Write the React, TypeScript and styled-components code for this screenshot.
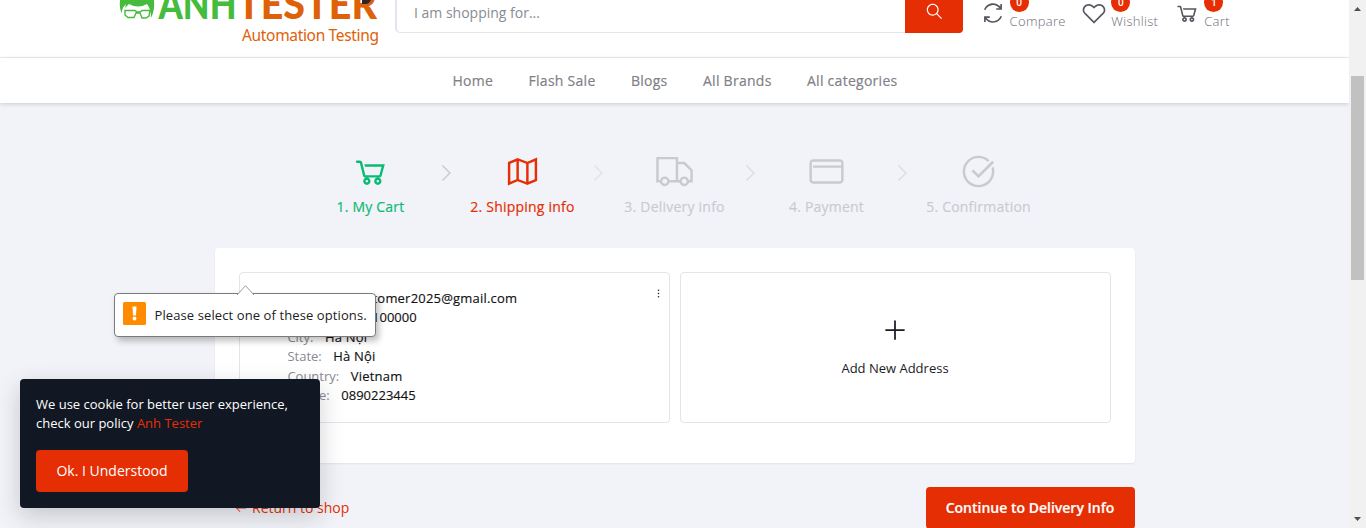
import React from "react";
import styled, { createGlobalStyle } from "styled-components";
import {
  LiaAngleRightSolid,
  LiaArrowLeftSolid,
  LiaCheckCircle,
  LiaCreditCard,
  LiaEllipsisVSolid,
  LiaHeart,
  LiaMapSolid,
  LiaPlusSolid,
  LiaSearchSolid,
  LiaShoppingCartSolid,
  LiaSyncSolid,
  LiaTruckSolid,
} from "react-icons/lia";

const RED = "#e62e04";
const GREEN = "#0abb75";
const INK = "#1b1b28";

const GlobalStyle = createGlobalStyle`
  * { box-sizing: border-box; }
  body {
    margin: 0;
    overflow: hidden;
    background: #f2f3f8;
    color: ${INK};
    font: 400 13px/19.5px "Open Sans", "Noto Sans", sans-serif;
  }
  svg { display: block; flex: none; }
`;

const Window = styled.div`
  display: flex;
  height: 528px;
  overflow: hidden;
`;

const Page = styled.div`
  position: relative;
  width: 1349px;
  height: 528px;
  overflow: hidden;
`;

const TopBar = styled.header`
  display: flex;
  height: 58px;
  padding-left: 118px;
  background: #fff;
  border-bottom: 1px solid #eeeef0;
`;

const LogoArt = styled.svg`
  width: 262px;
  height: 50px;
  margin-right: 15px;
`;

const Search = styled.div`
  display: flex;
  width: 568px;
  height: 33px;
`;

const SearchInput = styled.div`
  flex: 1;
  padding: 3px 0 0 17px;
  border: solid #e2e5ec;
  border-width: 0 0 1px 2px;
  border-radius: 0 0 0 5px;
  color: #898b92;
  font-size: 14px;
`;

const SearchButton = styled.div`
  display: flex;
  justify-content: center;
  width: 58px;
  padding-top: 2px;
  border-radius: 0 0 4px 0;
  background: ${RED};
  color: #fff;
  svg { transform: scaleX(-1); }
`;

const HeaderLink = styled.div<{ $gap: number }>`
  display: flex;
  height: 40px;
  margin-left: ${(p) => p.$gap}px;
  color: #55565f;
`;

const HeaderLabel = styled.div`
  display: flex;
  flex-direction: column;
  margin: -7px 0 0 4px;
  color: #6b6c74;
  font-weight: 300;
  letter-spacing: 0.3px;
`;

const Badge = styled.span`
  display: block;
  width: 19px;
  height: 19px;
  border-radius: 10px;
  background: ${RED};
  color: #fff;
  font-size: 10px;
  font-weight: 600;
  line-height: 19px;
  letter-spacing: 0;
  text-align: center;
`;

const Nav = styled.nav`
  display: flex;
  justify-content: center;
  gap: 35.4px;
  height: 45px;
  padding: 13px 0 0 1px;
  background: #fff;
  box-shadow: 0 1px 4px rgba(30, 35, 60, 0.18);
  color: #808088;
  font-size: 14px;
  letter-spacing: 0.27px;
  -webkit-text-stroke: 0.18px;
`;

const Steps = styled.div`
  display: flex;
  width: 760px;
  margin: 49px auto 0 294.5px;
`;

const Step = styled.div<{ $color: string; $faded?: boolean }>`
  position: relative;
  display: flex;
  flex-direction: column;
  align-items: center;
  width: 152px;
  height: 96px;
  color: ${(p) => p.$color};
  opacity: ${(p) => (p.$faded ? 0.5 : 1)};
  font-size: 14px;
  letter-spacing: 0.22px;
`;

const StepTitle = styled.div`
  margin-top: 6px;
  -webkit-text-stroke: 0.18px;
`;

const StepArrow = styled.div<{ $faded?: boolean }>`
  position: absolute;
  top: 10px;
  right: -9px;
  color: ${(p) => (p.$faded ? "#e0e1e6" : "#c8c9ce")};
`;

const Panel = styled.section`
  display: grid;
  grid-template-columns: 1fr 1fr;
  gap: 10px;
  width: 920px;
  height: 215px;
  margin-left: 215px;
  padding: 24px 24px 40px;
  border-radius: 4px;
  background: #fff;
  box-shadow: 0 1px 2px rgba(30, 35, 60, 0.07);
`;

const AddressCard = styled.div`
  display: flex;
  justify-content: space-between;
  padding: 15.6px 4px 0 47.4px;
  border: 1px solid #e2e5ec;
  border-radius: 4px;
`;

const CardMenu = styled.div`
  margin-top: -2px;
`;

const FieldName = styled.span`
  margin-right: 11.6px;
  color: #898a92;
`;

const FieldValue = styled.span<{ $numeric: boolean }>`
  color: #111;
  letter-spacing: ${(p) => (p.$numeric ? 0 : 0.2)}px;
  -webkit-text-stroke: 0.15px;
`;

const AddCard = styled.div`
  display: flex;
  flex-direction: column;
  align-items: center;
  gap: 15px;
  padding: 43px 1px 0 0;
  border: 1px solid #e2e5ec;
  border-radius: 4px;
`;

const Actions = styled.div`
  display: flex;
  justify-content: space-between;
  width: 920px;
  margin: 24px 0 0 215px;
`;

const ReturnLink = styled.a`
  display: flex;
  align-items: center;
  gap: 4px;
  height: 42px;
  padding-left: 19px;
  color: ${RED};
  font-size: 14px;
`;

const ContinueButton = styled.div`
  width: 209px;
  height: 42px;
  padding-right: 1px;
  border-radius: 4px;
  background: ${RED};
  color: #fff;
  font-size: 14px;
  font-weight: 600;
  line-height: 42px;
  text-align: center;
  -webkit-text-stroke: 0.2px;
`;

const Bubble = styled.div`
  position: absolute;
  top: 293px;
  left: 114px;
  display: flex;
  align-items: center;
  width: 262px;
  height: 44px;
  padding: 0 0 3px 8px;
  border: 1px solid #7b7b7b;
  border-radius: 4px;
  background: #fff;
  box-shadow: 3px 4px 6px rgba(0, 0, 0, 0.25);
`;

const BubbleTip = styled.svg`
  position: absolute;
  top: -9px;
  left: 120.5px;
`;

const BubbleText = styled.span`
  margin: 4px 0 0 8.5px;
  color: #222;
  letter-spacing: 0.1px;
  white-space: nowrap;
`;

const CookieNotice = styled.aside`
  position: absolute;
  top: 379px;
  left: 20px;
  width: 300px;
  height: 129px;
  padding: 15.5px 16px;
  border-radius: 4px;
  background: #111723;
  box-shadow: 0 8px 24px rgba(20, 25, 40, 0.2);
  color: #fff;
`;

const CookieText = styled.p`
  margin: 0 0 16.5px;
  white-space: nowrap;
  a { color: ${RED}; }
`;

const CookieButton = styled.div`
  width: 152px;
  height: 42px;
  border-radius: 4px;
  background: ${RED};
  font-size: 14px;
  line-height: 42px;
  text-align: center;
`;

const ScrollTrack = styled.div`
  display: flex;
  flex-direction: column;
  align-items: center;
  width: 17px;
  height: 528px;
  background: #f1f1f1;
`;

const ScrollThumb = styled.div`
  width: 13px;
  height: 204px;
  margin: 59px 0 231px;
  background: #c1c1c1;
`;

function Logo() {
  return (
    <LogoArt viewBox="118 0 262 50">
      <path
        d="M120 0H154Q155 10 151 18Q151 9 147 4Q138 9 129 4L125 8L126 4Q121 9 122 14Q119 8 120 0Z"
        fill="#45bc3e"
      />
      <path
        d="M125 10.5H135L137 12H140L142 10.5H150L149 16L146 18H142L140 13H136L134 17.5H128L125 15Z"
        fill="#fff"
        stroke="#45bc3e"
        strokeWidth="1.4"
      />
      <text x="158.5" y="18.7" fontFamily="Lato" fontWeight="900" fontSize="41" fill="#45bc3e" textLength="78" lengthAdjust="spacingAndGlyphs">ANH</text>
      <text x="237" y="18.7" fontFamily="Lato" fontWeight="900" fontSize="41" fill="#df6107" textLength="140" lengthAdjust="spacingAndGlyphs">TESTER</text>
      <path d="M362 0H371Q369 4 366 4H362Z" fill="#2b2523" />
      <text x="242" y="41" fontFamily="Noto Sans" fontSize="15.5" fill="#df6107" textLength="137">Automation Testing</text>
    </LogoArt>
  );
}

function ScrollArrow({ up }: { up?: boolean }) {
  return (
    <svg width="17" height="17" viewBox="0 0 17 17">
      <path d={up ? "M5 11H12L8.5 7Z" : "M5 6H12L8.5 10Z"} fill="#505050" />
    </svg>
  );
}

const ADDRESS = [
  ["Address:", "customer2025@gmail.com"],
  ["Postal code:", "100000"],
  ["City:", "Hà Nội"],
  ["State:", "Hà Nội"],
  ["Country:", "Vietnam"],
  ["Phone:", "0890223445"],
];

const MENU = ["Home", "Flash Sale", "Blogs", "All Brands", "All categories"];

export default function App() {
  return (
    <Window>
      <GlobalStyle />
      <Page>
        <TopBar>
          <Logo />
          <Search>
            <SearchInput>I am shopping for...</SearchInput>
            <SearchButton>
              <LiaSearchSolid size={19} />
            </SearchButton>
          </Search>
          <HeaderLink $gap={16.6}>
            <LiaSyncSolid size={26} />
            <HeaderLabel><Badge>0</Badge>Compare</HeaderLabel>
          </HeaderLink>
          <HeaderLink $gap={15.6}>
            <LiaHeart size={26} />
            <HeaderLabel><Badge>0</Badge>Wishlist</HeaderLabel>
          </HeaderLink>
          <HeaderLink $gap={16}>
            <LiaShoppingCartSolid size={26} />
            <HeaderLabel><Badge>1</Badge>Cart</HeaderLabel>
          </HeaderLink>
        </TopBar>
        <Nav>
          {MENU.map((item) => <span key={item}>{item}</span>)}
        </Nav>

        <Steps>
          <Step $color={GREEN}>
            <LiaShoppingCartSolid size={39} />
            <StepTitle>1. My Cart</StepTitle>
            <StepArrow><LiaAngleRightSolid size={22} /></StepArrow>
          </Step>
          <Step $color={RED}>
            <LiaMapSolid size={39} />
            <StepTitle>2. Shipping info</StepTitle>
            <StepArrow $faded><LiaAngleRightSolid size={22} /></StepArrow>
          </Step>
          <Step $color="#a1a2a8" $faded>
            <LiaTruckSolid size={39} />
            <StepTitle>3. Delivery info</StepTitle>
            <StepArrow><LiaAngleRightSolid size={22} /></StepArrow>
          </Step>
          <Step $color="#a1a2a8" $faded>
            <LiaCreditCard size={39} />
            <StepTitle>4. Payment</StepTitle>
            <StepArrow><LiaAngleRightSolid size={22} /></StepArrow>
          </Step>
          <Step $color="#a1a2a8" $faded>
            <LiaCheckCircle size={39} />
            <StepTitle>5. Confirmation</StepTitle>
          </Step>
        </Steps>

        <Panel>
          <AddressCard>
            <div>
              {ADDRESS.map(([name, value]) => (
                <div key={name}>
                  <FieldName>{name}</FieldName>
                  <FieldValue $numeric={/^\d+$/.test(value)}>{value}</FieldValue>
                </div>
              ))}
            </div>
            <CardMenu>
              <LiaEllipsisVSolid size={13} />
            </CardMenu>
          </AddressCard>
          <AddCard>
            <LiaPlusSolid size={28} />
            <span>Add New Address</span>
          </AddCard>
        </Panel>

        <Actions>
          <ReturnLink>
            <LiaArrowLeftSolid size={14} />
            Return to shop
          </ReturnLink>
          <ContinueButton>Continue to Delivery Info</ContinueButton>
        </Actions>

        <Bubble>
          <BubbleTip width="20" height="10" viewBox="0 0 20 10">
            <path d="M1 10L9.5 0.7L18 10" fill="#fff" stroke="#999" />
          </BubbleTip>
          <svg width="23" height="23" viewBox="0 0 23 23">
            <rect width="23" height="23" rx="1.5" fill="#ff8c00" />
            <path d="M9.5 4.5H13.5L13 13.5H10Z" fill="#fff" />
            <circle cx="11.5" cy="16.5" r="1.9" fill="#fff" />
          </svg>
          <BubbleText>Please select one of these options.</BubbleText>
        </Bubble>

        <CookieNotice>
          <CookieText>
            We use cookie for better user experience,
            <br />
            check our policy <a>Anh Tester</a>
          </CookieText>
          <CookieButton>Ok. I Understood</CookieButton>
        </CookieNotice>
      </Page>
      <ScrollTrack>
        <ScrollArrow up />
        <ScrollThumb />
        <ScrollArrow />
      </ScrollTrack>
    </Window>
  );
}
